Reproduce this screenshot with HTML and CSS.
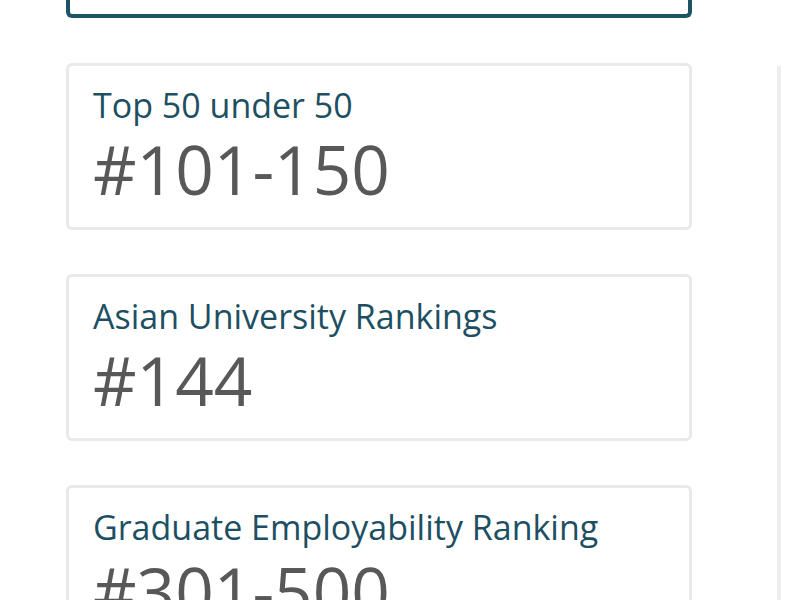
FILE: index.html
```html
<!DOCTYPE html>
<html lang="en">
<head>
<meta charset="utf-8">
<title>Rankings</title>
<link rel="stylesheet" href="styles.css">
</head>
<body>
<div class="page">
  <main class="main">
    <div class="top-box"></div>
    <div class="card">
      <div class="card-label">Top 50 under 50</div>
      <div class="card-rank">#101-150</div>
    </div>
    <div class="card">
      <div class="card-label">Asian University Rankings</div>
      <div class="card-rank">#144</div>
    </div>
    <div class="card">
      <div class="card-label">Graduate Employability Ranking</div>
      <div class="card-rank">#301-500</div>
    </div>
  </main>
  <aside class="side"></aside>
</div>
</body>
</html>
```
FILE: styles.css
```css
html, body {
  margin: 0;
  padding: 0;
  background: #ffffff;
  overflow: hidden;
}
body {
  font-family: "Open Sans", "Liberation Sans", sans-serif;
}
.page {
  display: flex;
  align-items: flex-start;
  height: 600px;
}
.main {
  width: 626px;
  margin-left: 66px;
  display: flex;
  flex-direction: column;
  gap: 44px;
}
.top-box {
  height: 14px;
  border: 4px solid #1b5467;
  border-top: 0;
  border-radius: 0 0 6px 6px;
  margin-bottom: 1px;
}
.card {
  border: 3px solid #e9e9e9;
  border-radius: 6px;
  padding: 19px 24px 18px;
  flex-shrink: 0;
}
.card-label {
  font-size: 34px;
  line-height: 40px;
  color: #1d4f63;
  white-space: nowrap;
}
.card-rank {
  margin-top: 4px;
  font-size: 67.5px;
  line-height: 80px;
  color: #585858;
  white-space: nowrap;
}
.side {
  margin-left: 85px;
  margin-top: 66px;
  width: 0;
  height: 534px;
  border-left: 4px solid #eeeeee;
}
```
